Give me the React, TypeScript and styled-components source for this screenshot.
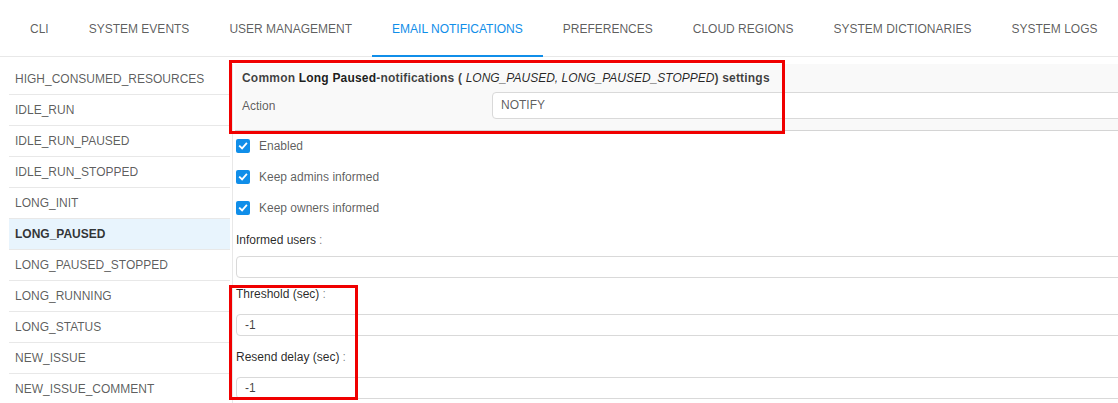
import React from "react";
import styled, { createGlobalStyle } from "styled-components";

const GlobalStyle = createGlobalStyle`
  html, body {
    margin: 0;
    padding: 0;
    background: #ffffff;
    overflow: hidden;
  }
  body {
    font-family: "Liberation Sans", Arial, Helvetica, sans-serif;
    font-size: 12px;
    color: rgba(0, 0, 0, 0.65);
  }
  * { box-sizing: border-box; }
`;

const Page = styled.div`
  position: relative;
  width: 1130px;
  height: 403px;
  overflow: hidden;
`;

const TabBar = styled.nav`
  display: flex;
  height: 57px;
  padding-left: 10px;
  border-bottom: 1px solid #e8e8e8;
`;

const Tab = styled.div<{ $active?: boolean }>`
  display: flex;
  align-items: center;
  padding: 3px 20px 0;
  margin-bottom: -1px;
  font-size: 12px;
  text-transform: uppercase;
  white-space: nowrap;
  color: ${(p) => (p.$active ? "#108ee9" : "rgba(0, 0, 0, 0.65)")};
  border-bottom: 2px solid ${(p) => (p.$active ? "#108ee9" : "transparent")};
`;

const Body = styled.div`
  display: flex;
  padding-top: 7px;
`;

const Sidebar = styled.ul`
  list-style: none;
  margin: 0 0 0 9px;
  padding: 0 2px 0 0;
  width: 224px;
  flex: none;
  border-right: 1px solid #e8e8e8;
`;

const SideItem = styled.li<{ $selected?: boolean }>`
  height: 31px;
  line-height: 30px;
  padding-left: 6px;
  border-bottom: 1px solid #e8e8e8;
  font-size: 12px;
  white-space: nowrap;
  color: ${(p) => (p.$selected ? "rgba(0, 0, 0, 0.8)" : "rgba(0, 0, 0, 0.65)")};
  font-weight: ${(p) => (p.$selected ? "bold" : "normal")};
  background: ${(p) => (p.$selected ? "#e8f4fd" : "transparent")};
`;

const Panel = styled.section`
  flex: 1;
  padding-left: 2px;
  display: flex;
  flex-direction: column;
`;

const CommonBox = styled.div`
  background: #f9f9f9;
  border-bottom: 1px solid #d4d4d4;
  padding: 0 0 11px 7px;
`;

const BoxTitle = styled.div`
  height: 28px;
  line-height: 28px;
  font-weight: 600;
  letter-spacing: 0.2px;
  color: rgba(0, 0, 0, 0.75);
  white-space: nowrap;
  b { font-weight: bold; color: rgba(0, 0, 0, 0.9); }
  i { font-style: italic; font-weight: normal; letter-spacing: 0; color: rgba(0, 0, 0, 0.85); }
`;

const BoxRow = styled.div`
  display: flex;
  align-items: center;
  height: 27px;
`;

const BoxLabel = styled.div`
  width: 250px;
  flex: none;
  color: rgba(0, 0, 0, 0.65);
`;

const SelectBox = styled.div`
  flex: 1;
  height: 27px;
  line-height: 25px;
  padding-left: 8px;
  background: #ffffff;
  border: 1px solid #d9d9d9;
  border-radius: 4px;
  color: rgba(0, 0, 0, 0.65);
`;

const Form = styled.div`
  padding-left: 1px;
  display: flex;
  flex-direction: column;
`;

const CheckRow = styled.label`
  display: flex;
  align-items: center;
  height: 31px;
  padding-bottom: 2px;
  color: rgba(0, 0, 0, 0.65);
`;

const CheckBox = styled.span`
  width: 14px;
  height: 14px;
  flex: none;
  border-radius: 2px;
  background: #108ee9;
  display: flex;
  align-items: center;
  justify-content: center;
  margin-right: 9px;
`;

const FieldLabel = styled.div<{ $top: number }>`
  margin-top: ${(p) => p.$top}px;
  height: 20px;
  line-height: 20px;
  color: rgba(0, 0, 0, 0.85);
`;

const Colon = styled.span`
  margin-left: 3px;
  color: rgba(0, 0, 0, 0.5);
`;

const TextInput = styled.div<{ $top: number }>`
  margin-top: ${(p) => p.$top}px;
  height: 22px;
  line-height: 20px;
  padding-left: 8px;
  border: 1px solid #d9d9d9;
  border-radius: 4px;
  background: #ffffff;
  color: rgba(0, 0, 0, 0.75);
`;

const Annotation = styled.div<{ $x: number; $y: number; $w: number; $h: number }>`
  position: absolute;
  left: ${(p) => p.$x}px;
  top: ${(p) => p.$y}px;
  width: ${(p) => p.$w}px;
  height: ${(p) => p.$h}px;
  border: 3px solid #f00000;
  pointer-events: none;
`;

const tabs = [
  "CLI",
  "System events",
  "User management",
  "Email notifications",
  "Preferences",
  "Cloud regions",
  "System dictionaries",
  "System logs",
];

const items = [
  "HIGH_CONSUMED_RESOURCES",
  "IDLE_RUN",
  "IDLE_RUN_PAUSED",
  "IDLE_RUN_STOPPED",
  "LONG_INIT",
  "LONG_PAUSED",
  "LONG_PAUSED_STOPPED",
  "LONG_RUNNING",
  "LONG_STATUS",
  "NEW_ISSUE",
  "NEW_ISSUE_COMMENT",
];

const Check = () => (
  <svg width="10" height="10" viewBox="0 0 10 10">
    <path d="M1.8 5.2 L4.1 7.4 L8.3 2.6" fill="none" stroke="#fff" strokeWidth="1.8" strokeLinecap="square" />
  </svg>
);

export default function App() {
  return (
    <>
      <GlobalStyle />
      <Page>
        <TabBar>
          {tabs.map((t) => (
            <Tab key={t} $active={t === "Email notifications"}>
              {t}
            </Tab>
          ))}
        </TabBar>
        <Body>
          <Sidebar>
            {items.map((i) => (
              <SideItem key={i} $selected={i === "LONG_PAUSED"}>
                {i}
              </SideItem>
            ))}
          </Sidebar>
          <Panel>
            <CommonBox>
              <BoxTitle>
                Common <b>Long Paused</b>-notifications ( <i>LONG_PAUSED, LONG_PAUSED_STOPPED</i>) settings
              </BoxTitle>
              <BoxRow>
                <BoxLabel>Action</BoxLabel>
                <SelectBox>NOTIFY</SelectBox>
              </BoxRow>
            </CommonBox>
            <Form>
              <CheckRow>
                <CheckBox><Check /></CheckBox>
                Enabled
              </CheckRow>
              <CheckRow>
                <CheckBox><Check /></CheckBox>
                Keep admins informed
              </CheckRow>
              <CheckRow>
                <CheckBox><Check /></CheckBox>
                Keep owners informed
              </CheckRow>
              <FieldLabel $top={6}>
                Informed users<Colon>:</Colon>
              </FieldLabel>
              <TextInput $top={6} />
              <FieldLabel $top={6}>
                Threshold (sec)<Colon>:</Colon>
              </FieldLabel>
              <TextInput $top={10}>-1</TextInput>
              <FieldLabel $top={11}>
                Resend delay (sec)<Colon>:</Colon>
              </FieldLabel>
              <TextInput $top={10}>-1</TextInput>
            </Form>
          </Panel>
        </Body>
        <Annotation $x={229} $y={60} $w={556} $h={74} />
        <Annotation $x={229} $y={285} $w={129} $h={115} />
      </Page>
    </>
  );
}
